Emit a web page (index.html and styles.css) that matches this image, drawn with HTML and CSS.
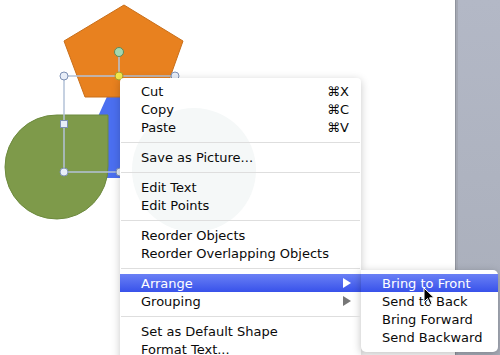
FILE: index.html
```html
<!DOCTYPE html>
<html lang="en">
<head>
    <meta charset="UTF-8">
    <title>Arrange menu</title>
    <link rel="stylesheet" href="styles.css">
</head>
<body>

    <div class="screen">
        <div class="slide">
            <svg class="canvas" width="453" height="355" viewBox="0 0 453 355">
                <polygon points="110,90 150,90 150,178 70,178" fill="#4b6ff0"/>
                <polygon points="124,5 183,41 163,97 85,97 64,41" fill="#e8811f" stroke="#c96f1a" stroke-width="1"/>
                <path d="M57,115 H108 V166 A51.5,52 0 1 1 57,115 Z" fill="#7e9a4a" stroke="#6d8a3e" stroke-width="1"/>
                <!-- selection box -->
                <g stroke="#b4c2d8" stroke-width="1.5" fill="none">
                    <path d="M64,76 H176 M64,76 V172 H120 M119,52 V76"/>
                </g>
                <g stroke="#7d90b4" stroke-width="1" fill="#e8eef8">
                    <circle cx="64" cy="76" r="4"/>
                    <circle cx="175" cy="76" r="4"/>
                    <circle cx="64" cy="172" r="4"/>
                    <circle cx="120" cy="172" r="4"/>
                    <rect x="60.5" y="120.5" width="7" height="7"/>
                </g>
                <circle cx="119" cy="52" r="4.5" fill="#a4d8b0" stroke="#5c8a5e"/>
                <circle cx="119" cy="76" r="4" fill="#f4e84a" stroke="#a99a2a"/>
            </svg>

            <div class="menu">
                <div class="glow"></div>
                <ul>
                    <li>Cut <span class="key">⌘X</span></li>
                    <li>Copy <span class="key">⌘C</span></li>
                    <li>Paste <span class="key">⌘V</span></li>
                    <li class="sep"></li>
                    <li>Save as Picture...</li>
                    <li class="sep"></li>
                    <li>Edit Text</li>
                    <li>Edit Points</li>
                    <li class="sep"></li>
                    <li>Reorder Objects</li>
                    <li>Reorder Overlapping Objects</li>
                    <li class="sep"></li>
                    <li class="active has-sub">Arrange <span class="arrow"></span>
                        <ul class="submenu">
                            <li class="active">Bring to Front</li>
                            <li>Send to Back</li>
                            <li>Bring Forward</li>
                            <li>Send Backward</li>
                        </ul>
                    </li>
                    <li class="has-sub">Grouping <span class="arrow"></span></li>
                    <li class="sep"></li>
                    <li>Set as Default Shape</li>
                    <li>Format Text...</li>
                </ul>
            </div>

            <svg class="cursor" width="12" height="19" viewBox="0 0 12 19">
                <path d="M1,1 V15 L4.5,11.5 L7,17.5 L9,16.6 L6.6,10.8 H11.2 Z" fill="#000" stroke="#fff" stroke-width="1"/>
            </svg>
        </div>
        <div class="panel"></div>
    </div>

</body>
</html>
```

FILE: styles.css
```css
body {
    margin: 0;
    padding: 0;
    background: #fff;
    font-family: "DejaVu Sans", "Liberation Sans", sans-serif;
}
.screen {
    display: flex;
    width: 500px;
    height: 355px;
    overflow: hidden;
}
.slide {
    position: relative;
    flex: 1;
    background: #fff;
}
.canvas {
    display: block;
}
.panel {
    width: 44px;
    border-left: 1px solid #8f939d;
    box-shadow: inset 2px 0 0 #a4a8b3;
    background: linear-gradient(#b3b8c6, #a9aeba);
}
.menu {
    position: absolute;
    left: 120px;
    top: 78px;
    width: 241px;
    height: 290px;
    background: #fff;
    box-shadow: 0 2px 8px rgba(0, 0, 0, 0.22);
    border-radius: 4px 4px 0 0;
    overflow: visible;
}
.glow {
    position: absolute;
    left: 12px;
    top: 30px;
    width: 124px;
    height: 124px;
    border-radius: 50%;
    background: #f5f8f8;
}
.menu ul {
    list-style: none;
    margin: 0;
    padding: 4px 0 0;
    position: relative;
}
.menu li {
    position: relative;
    display: flex;
    align-items: center;
    height: 18px;
    padding: 0 12px 0 21px;
    font-size: 13px;
    color: #0a0a0a;
}
.menu li.sep {
    height: 1px;
    padding: 0;
    margin: 6px 1px 5px;
    background: #dedede;
}
.key {
    margin-left: auto;
    font-size: 13px;
}
.menu li.active {
    color: #fff;
    background: linear-gradient(#6a80f5, #3852ea);
}
.arrow {
    margin-left: auto;
    margin-right: -2px;
    width: 0;
    height: 0;
    border-top: 5px solid transparent;
    border-bottom: 5px solid transparent;
    border-left: 8px solid #777;
}
.active .arrow {
    border-left-color: #fff;
}
.menu .submenu {
    position: absolute;
    left: 241px;
    top: -4px;
    width: 137px;
    padding: 4px 0 6px;
    background: #fff;
    border-radius: 0 5px 5px 5px;
    box-shadow: 0 2px 8px rgba(0, 0, 0, 0.25);
}
.submenu li {
    color: #0a0a0a;
}
.cursor {
    position: absolute;
    left: 423px;
    top: 287px;
}
```
